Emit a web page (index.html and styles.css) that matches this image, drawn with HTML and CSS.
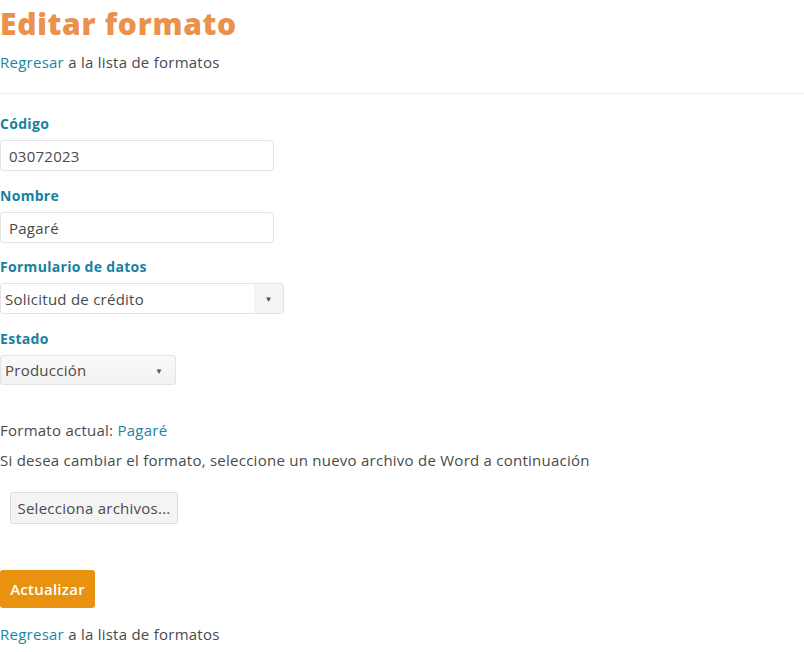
FILE: index.html
```html
<!DOCTYPE html>
<html lang="es">
<head>
<meta charset="utf-8">
<title>Editar formato</title>
<link rel="stylesheet" href="styles.css">
</head>
<body>
<main class="page">
  <h1 class="title">Editar formato</h1>
  <p class="back"><a href="#">Regresar</a> a la lista de formatos</p>
  <hr class="rule">
  <form class="form">
    <div class="field">
      <label class="label">Código</label>
      <input class="input" type="text" value="03072023">
    </div>
    <div class="field">
      <label class="label">Nombre</label>
      <input class="input" type="text" value="Pagaré">
    </div>
    <div class="field field-tight">
      <label class="label">Formulario de datos</label>
      <div class="select select-wide">
        <span class="select-text">Solicitud de crédito</span>
        <span class="select-arrow">▼</span>
      </div>
    </div>
    <div class="field">
      <label class="label">Estado</label>
      <div class="select select-small">
        <span class="select-text">Producción</span>
        <span class="select-arrow">▼</span>
      </div>
    </div>
    <p class="current">Formato actual: <a href="#">Pagaré</a></p>
    <p class="hint">Si desea cambiar el formato, seleccione un nuevo archivo de Word a continuación</p>
    <div class="file-row">
      <button type="button" class="file-btn">Selecciona archivos...</button>
    </div>
    <button type="button" class="submit">Actualizar</button>
  </form>
  <p class="back back-bottom"><a href="#">Regresar</a> a la lista de formatos</p>
</main>
</body>
</html>
```

FILE: styles.css
```css
* { box-sizing: border-box; }
html, body { margin: 0; padding: 0; background: #fff; }
body {
  font-family: "Open Sans", "Noto Sans", sans-serif;
  font-size: 15px;
  letter-spacing: 0.25px;
  color: #4a4a4a;
}
a { color: #1b86a3; text-decoration: none; }
.page { padding-top: 4px; }
.title {
  margin: 0;
  font-family: "Open Sans", sans-serif;
  font-weight: 800;
  font-size: 30px;
  line-height: 40px;
  color: #ea914c;
  letter-spacing: 0.7px;
}
.back { margin: 8px 0 0; line-height: 20px; }
.rule {
  border: 0;
  border-top: 1px solid #ececec;
  margin: 21px 0 0;
}
.form { padding-top: 21px; }
.field { margin-bottom: 15px; }
.field:first-child { margin-bottom: 16px; }
.label {
  display: block;
  font-weight: 700;
  font-size: 14px;
  letter-spacing: 0.3px;
  line-height: 18px;
  color: #1682a0;
  margin-bottom: 7px;
}
.input {
  display: block;
  width: 274px;
  height: 31px;
  border: 1px solid #e3e3e3;
  border-radius: 3px;
  padding: 0 8px;
  font: inherit;
  letter-spacing: inherit;
  color: #4a4a4a;
  background: #fff;
}
.select {
  display: flex;
  align-items: stretch;
  height: 31px;
  border: 1px solid #e3e3e3;
  border-radius: 3px;
  background: #fff;
}
.field-tight { margin-bottom: 16px; }
.select-wide { width: 284px; }
.select-small { width: 176px; height: 30px; background: linear-gradient(#fafafa, #f2f2f2); }
.select-text { flex: 1; display: flex; align-items: center; padding-left: 4px; }
.select-arrow {
  width: 29px;
  display: flex;
  align-items: center;
  justify-content: center;
  font-size: 8px;
  color: #555;
}
.select-wide .select-arrow { background: #f4f4f4; }
.select-small .select-arrow { width: 32px; }
.current { margin: 35px 0 0; line-height: 20px; }
.hint { margin: 10px 0 0; line-height: 20px; }
.file-row { padding: 22px 0 0 10px; }
.file-btn {
  font: inherit;
  letter-spacing: inherit;
  color: #4a4a4a;
  width: 168px;
  height: 32px;
  border: 1px solid #dcdcdc;
  border-radius: 3px;
  background: #f4f4f4;
  padding: 0;
}
.submit {
  display: block;
  margin-top: 46px;
  width: 95px;
  height: 38px;
  border: 0;
  border-radius: 3px;
  background: #e8920f;
  color: #fff;
  font: inherit;
  letter-spacing: inherit;
  font-weight: 600;
  padding: 0;
}
.back-bottom { margin-top: 16px; }
```
